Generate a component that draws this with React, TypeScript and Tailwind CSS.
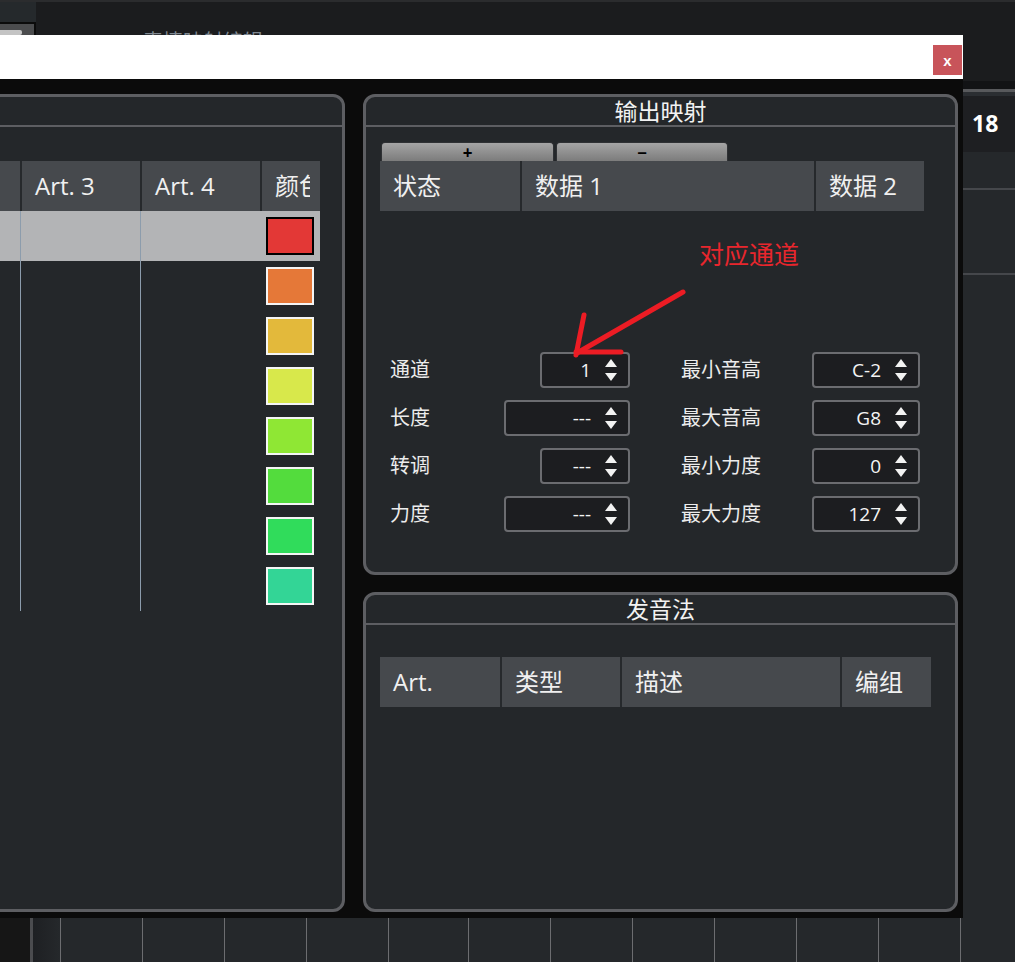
import React from "react";

const F = "font-['Open_Sans','Noto_Sans_CJK_SC',sans-serif]";

function Panel({
  title,
  className = "",
  children,
}: {
  title?: string;
  className?: string;
  children?: React.ReactNode;
}) {
  return (
    <div
      className={`relative flex flex-col border-[3px] border-[#5d5e62] rounded-[12px] bg-[#24272a] overflow-hidden ${className}`}
    >
      <div className="h-[30px] shrink-0 border-b-2 border-[#5d5e62] flex items-center justify-center text-[23px] leading-none text-[#f2f2f2]">
        {title}
      </div>
      {children}
    </div>
  );
}

function HCell({ w, children }: { w: string; children?: React.ReactNode }) {
  return (
    <div
      className={`${w} h-full bg-[#46494d] flex items-center pl-[13px] text-[24px] leading-none text-[#f0f0f0] whitespace-nowrap overflow-hidden`}
    >
      {children}
    </div>
  );
}

function Arrows() {
  return (
    <svg width="12" height="24" viewBox="0 0 12 24" className="shrink-0">
      <polygon points="6,1 12,9 0,9" fill="#f2f2f2" />
      <polygon points="0,15 12,15 6,23" fill="#f2f2f2" />
    </svg>
  );
}

function Spin({ value, w }: { value: string; w: string }) {
  return (
    <div
      className={`${w} h-[36px] rounded-[4px] border-2 border-[#6b6c70] bg-[#1c1d20] flex items-center justify-end pr-[11px]`}
    >
      <span className="text-[19px] leading-none text-[#f4f4f4] mr-[14px]">{value}</span>
      <Arrows />
    </div>
  );
}

const swatches: { c: string; b: string }[] = [
  { c: "bg-[#e33836]", b: "border-black" },
  { c: "bg-[#e57838]", b: "border-[#f5f5f5]" },
  { c: "bg-[#e3b93b]", b: "border-[#f5f5f5]" },
  { c: "bg-[#d8e84b]", b: "border-[#f5f5f5]" },
  { c: "bg-[#8fe734]", b: "border-[#f5f5f5]" },
  { c: "bg-[#53dc3d]", b: "border-[#f5f5f5]" },
  { c: "bg-[#30dc5b]", b: "border-[#f5f5f5]" },
  { c: "bg-[#33d596]", b: "border-[#f5f5f5]" },
];

const formRows: { l: string; lv: string; lw: string; r: string; rv: string }[] = [
  { l: "通道", lv: "1", lw: "w-[90px]", r: "最小音高", rv: "C-2" },
  { l: "长度", lv: "---", lw: "w-[126px]", r: "最大音高", rv: "G8" },
  { l: "转调", lv: "---", lw: "w-[90px]", r: "最小力度", rv: "0" },
  { l: "力度", lv: "---", lw: "w-[126px]", r: "最大力度", rv: "127" },
];

const gridW = [
  "w-[82px]",
  "w-[82px]",
  "w-[82px]",
  "w-[82px]",
  "w-[80px]",
  "w-[82px]",
  "w-[82px]",
  "w-[82px]",
  "w-[82px]",
  "w-[82px]",
  "w-[82px]",
];

export default function App() {
  return (
    <div className={`${F} w-[1015px] h-[962px] bg-[#1b1c1e] overflow-hidden flex flex-col`}>
      {/* top bar */}
      <div className="h-[35px] shrink-0 flex border-t-2 border-[#2b2c2e] overflow-hidden">
        <div className="w-[36px] shrink-0 flex flex-col -mt-[2px]">
          <div className="h-[22px] bg-[#25292c]" />
          <div className="h-[2px] bg-[#0b0b0b]" />
          <div className="flex-1 flex">
            <div className="w-[34px] bg-[#4b4c4e] pt-[6px]">
              <div className="w-[22px] h-[5px] bg-[#c4c4c4] rounded-r-[2px]" />
            </div>
            <div className="flex-1 bg-[#0b0b0b]" />
          </div>
        </div>
        <div className="ml-[107px] pt-[30px] text-[20px] leading-none text-[#7f8891] whitespace-nowrap">
          表情映射编辑
        </div>
      </div>

      <div className="flex shrink-0">
        {/* dialog */}
        <div className="w-[963px] shrink-0 flex flex-col">
          <div className="h-[44px] bg-white flex justify-end items-start pt-[10px] pr-[1px]">
            <div className="w-[29px] h-[30px] bg-[#c8545a] flex items-center justify-center text-white font-bold text-[15px] leading-none font-['Liberation_Sans',sans-serif]">
              x
            </div>
          </div>
          <div className="h-[839px] bg-[#0b0b0b] flex pt-[15px] pb-[6px] gap-[18px]">
            {/* left panel */}
            <Panel className="ml-[-20px] w-[365px] h-full">
              <div className="mt-[34px] flex flex-col">
                <div className="flex gap-[2px] h-[50px] w-[337px] bg-[#26292c]">
                  <HCell w="w-[37px]" />
                  <HCell w="w-[118px]">Art. 3</HCell>
                  <HCell w="w-[118px]">Art. 4</HCell>
                  <div className="w-[58px] h-full bg-[#46494d] flex items-center pl-[13px] pr-[10px]">
                    <div className="overflow-hidden whitespace-nowrap text-[24px] leading-none text-[#f0f0f0]">
                      颜色
                    </div>
                  </div>
                </div>
                {swatches.map((s, i) => (
                  <div
                    key={i}
                    className={`flex h-[50px] w-[337px] ${i === 0 ? "bg-[#b3b4b6]" : ""}`}
                  >
                    <div className="w-[37px]" />
                    <div className="w-[120px] border-l border-[#8c9cac]" />
                    <div className="w-[120px] border-l border-[#8c9cac]" />
                    <div className="w-[60px] pl-[6px] pt-[6px]">
                      <div className={`w-[48px] h-[38px] border-2 ${s.b} ${s.c}`} />
                    </div>
                  </div>
                ))}
              </div>
            </Panel>

            {/* right column */}
            <div className="w-[595px] flex flex-col gap-[17px]">
              <Panel title="输出映射" className="h-[481px] shrink-0">
                <div className="pl-[14px] flex flex-col">
                  <div className="mt-[15px] h-[19px] flex gap-[2px] pl-[1px]">
                    <div className="w-[173px] h-full rounded-t-[4px] border border-b-0 border-[#2f3134] bg-gradient-to-b from-[#a5a5a5] to-[#7c7c7c] flex items-center justify-center text-[17px] font-bold leading-none text-black">
                      +
                    </div>
                    <div className="w-[172px] h-full rounded-t-[4px] border border-b-0 border-[#2f3134] bg-gradient-to-b from-[#a5a5a5] to-[#7c7c7c] flex items-center justify-center text-[17px] font-bold leading-none text-black">
                      −
                    </div>
                  </div>
                  <div className="flex gap-[2px] h-[50px] w-[544px] bg-[#26292c]">
                    <HCell w="w-[140px]">状态</HCell>
                    <HCell w="w-[292px]">数据 1</HCell>
                    <HCell w="w-[108px]">数据 2</HCell>
                  </div>
                  <div className="mt-[141px] pl-[10px] grid grid-cols-[240px_239px] gap-x-[51px] gap-y-[12px]">
                    {formRows.map((r) => (
                      <React.Fragment key={r.l}>
                        <div className="flex items-center justify-between h-[36px]">
                          <span className="text-[20px] leading-none text-[#ececec]">{r.l}</span>
                          <Spin value={r.lv} w={r.lw} />
                        </div>
                        <div className="flex items-center justify-between h-[36px]">
                          <span className="text-[20px] leading-none text-[#ececec]">{r.r}</span>
                          <Spin value={r.rv} w="w-[108px]" />
                        </div>
                      </React.Fragment>
                    ))}
                  </div>
                </div>
                {/* red annotation */}
                <div className="absolute left-[333px] top-[145px] text-[25px] leading-none text-[#e8262d] whitespace-nowrap">
                  对应通道
                </div>
                <svg
                  className="absolute left-0 top-0 pointer-events-none"
                  width="589"
                  height="475"
                  viewBox="0 0 589 475"
                >
                  <g stroke="#ec1c24" strokeWidth="5" strokeLinecap="round" fill="none">
                    <line x1="317" y1="195" x2="211" y2="256" />
                    <line x1="218" y1="218" x2="210" y2="258" />
                    <line x1="210" y1="255" x2="255" y2="255" />
                  </g>
                </svg>
              </Panel>

              <Panel title="发音法" className="flex-1">
                <div className="pl-[14px] mt-[32px]">
                  <div className="flex gap-[2px] h-[50px] w-[551px] bg-[#26292c]">
                    <HCell w="w-[120px]">Art.</HCell>
                    <HCell w="w-[118px]">类型</HCell>
                    <HCell w="w-[218px]">描述</HCell>
                    <HCell w="w-[89px]">编组</HCell>
                  </div>
                </div>
              </Panel>
            </div>
          </div>
        </div>

        {/* right strip */}
        <div className="flex-1 flex flex-col">
          <div className="h-[46px] bg-[#1b1c1e]" />
          <div className="h-[8px] bg-[#121315]" />
          <div className="h-[3px] bg-[#58595c]" />
          <div className="h-[4px] bg-[#2b2e32]" />
          <div className="h-[56px] bg-[#1e1f22] flex items-center pl-[9px] pb-[2px]">
            <span className="text-[23px] font-bold leading-none text-white">18</span>
          </div>
          <div className="h-[36px] bg-[#25282b]" />
          <div className="h-[2px] bg-[#45474b]" />
          <div className="h-[83px] bg-[#25282b]" />
          <div className="h-[2px] bg-[#45474b]" />
          <div className="flex-1 bg-[#25282b]" />
        </div>
      </div>

      {/* bottom strip */}
      <div className="flex-1 flex bg-[#25282b]">
        <div className="w-[30px] bg-[#161616]" />
        <div className="w-[3px] bg-[#4b4c4f]" />
        <div className="w-[27px] bg-gradient-to-r from-[#1e2023] to-[#25282b]" />
        {gridW.map((w, i) => (
          <div key={i} className={`${w} border-l border-[#6c6d70]`} />
        ))}
        <div className="flex-1 border-l border-[#6c6d70]" />
      </div>
    </div>
  );
}
